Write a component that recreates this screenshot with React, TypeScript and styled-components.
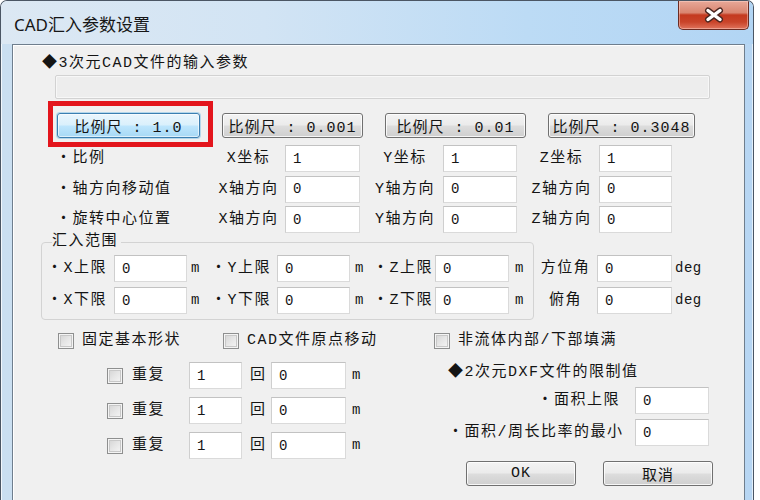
import styled, { createGlobalStyle, css } from "styled-components"

const UI_FONT = `"Liberation Mono", "Noto Sans CJK SC", monospace`

const GlobalStyle = createGlobalStyle`
  html, body {
    margin: 0;
    padding: 0;
    background: #ffffff;
    overflow: hidden;
  }
  body {
    font-family: ${UI_FONT};
  }
`

const Window = styled.div`
  width: 754px;
  height: 520px;
  box-sizing: border-box;
  border: 1px solid #4b5664;
  border-bottom: none;
  border-radius: 7px 7px 0 0;
  background: linear-gradient(90deg, #cadff1 0%, #c2dbf1 50%, #b7d6f3 100%);
  box-shadow: inset 1px 1px 0 rgba(255, 255, 255, 0.75), inset -1px 0 0 rgba(255, 255, 255, 0.6);
  display: flex;
  flex-direction: column;
  overflow: hidden;
`

const TitleBar = styled.div`
  height: 43px;
  flex: none;
  display: flex;
  justify-content: space-between;
  align-items: flex-start;
  background: linear-gradient(90deg, #dce8f3 0%, #d2e4f4 35%, #bcdbf5 70%, #b2d5f4 100%);
`

const Title = styled.div`
  padding: 4px 0 0 13px;
  line-height: 39px;
  font-family: "Noto Sans", "Noto Sans CJK SC", sans-serif;
  font-size: 17px;
  color: #161616;
`

const CloseButton = styled.div`
  width: 71px;
  height: 29px;
  margin-right: 4px;
  box-sizing: border-box;
  border: 1px solid #6b2b22;
  border-top: none;
  border-radius: 0 0 5px 5px;
  background: linear-gradient(#e8a898 0%, #d98570 42%, #c4391f 50%, #c9442a 75%, #e0735c 100%);
  box-shadow: inset 0 0 0 1px rgba(255, 220, 210, 0.45);
  display: flex;
  align-items: center;
  justify-content: center;
`

const Frame = styled.div`
  flex: 1;
  display: flex;
  padding: 0 8px 0 11px;
`

const Client = styled.div`
  flex: 1;
  box-sizing: border-box;
  border: 1px solid #6f7e8d;
  background: #f0f0f0;
  box-shadow: inset 1px 1px 0 #ffffff;
  color: #141414;
  font-size: 15px;
  letter-spacing: 1.5px;
`

const SectionHead = styled.div<{ $indent: number; $top: number }>`
  margin-top: ${({ $top }) => $top}px;
  padding-left: ${({ $indent }) => $indent}px;
  line-height: 20px;
  white-space: nowrap;
`

const PathBar = styled.div`
  margin: 1px 0 0 42px;
  width: 655px;
  height: 24px;
  box-sizing: border-box;
  border: 1px solid #d2d2d2;
  border-radius: 2px;
  background: #ededed;
  box-shadow: inset 0 0 0 1px #f7f7f7;
`

const ScaleRow = styled.div`
  display: flex;
  gap: 22px;
  margin: 14px 0 0 44px;
`

const PushButton = styled.button<{ $focused?: boolean; $marked?: boolean; $w: number }>`
  position: relative;
  width: ${({ $w }) => $w}px;
  height: 25px;
  box-sizing: border-box;
  padding: 0;
  border: 1px solid #707070;
  border-radius: 3px;
  background: linear-gradient(#f3f3f3 0%, #ebebeb 49%, #dddddd 51%, #cfcfcf 100%);
  box-shadow: inset 0 0 0 1px rgba(255, 255, 255, 0.8);
  font-family: ${UI_FONT};
  font-size: 15px;
  letter-spacing: 1px;
  color: #141414;
  white-space: nowrap;
  ${({ $focused }) =>
    $focused &&
    css`
      border-color: #3c7fb1;
      background: linear-gradient(#eaf6fd 0%, #d9f0fc 49%, #bee6fd 51%, #a7d9f5 100%);
      box-shadow: inset 0 0 0 1px rgba(255, 255, 255, 0.6), 0 0 0 1px rgba(120, 190, 230, 0.5);
    `}
  ${({ $marked }) =>
    $marked &&
    css`
      &::after {
        content: "";
        position: absolute;
        top: -13px;
        left: -10px;
        right: -14px;
        bottom: -10px;
        border: 5px solid #e3151c;
      }
    `}
`

const ParamGrid = styled.div`
  display: grid;
  grid-template-columns: 157px 73px 75px 83px 74px 82px 73px;
  grid-auto-rows: 27px;
  row-gap: 3.5px;
  margin: 7px 0 0 42px;
`

const Label = styled.div<{ $align?: "left" | "center" | "right"; $pad?: number }>`
  line-height: 27px;
  white-space: nowrap;
  text-align: ${({ $align }) => $align ?? "left"};
  padding-left: ${({ $pad }) => $pad ?? 0}px;
`

const Field = styled.input`
  width: 100%;
  height: 27px;
  box-sizing: border-box;
  margin: 0;
  padding: 0 0 0 7px;
  border: 1px solid #dadada;
  border-top-color: #c2c2c2;
  border-left-color: #cfcfcf;
  background: #ffffff;
  font-family: ${UI_FONT};
  font-size: 14px;
  color: #141414;
  outline: none;
`

const RangeRow = styled.div`
  display: flex;
  align-items: flex-start;
  margin-left: 28px;
`

const GroupBox = styled.fieldset`
  width: 493px;
  min-width: 0;
  box-sizing: border-box;
  margin: 0;
  padding: 0 0 5px 5px;
  border: 1px solid #d3d3d3;
  border-radius: 4px;
`

const Legend = styled.legend`
  margin-left: 5px;
  padding: 0 3px 0 0;
  line-height: 18px;
  font-size: 15px;
`

const RangeGrid = styled.div`
  display: grid;
  grid-template-columns: 67px 73px 24px 66px 73px 23px 62px 74px 22px;
  grid-auto-rows: 27px;
  row-gap: 5px;
  margin-top: 4px;
`

const Unit = styled.div<{ $pad: number }>`
  line-height: 27px;
  padding-left: ${({ $pad }) => $pad}px;
  font-size: 14px;
  letter-spacing: 0.5px;
`

const AngleGrid = styled.div`
  display: grid;
  grid-template-columns: 63px 75px auto;
  grid-auto-rows: 27px;
  row-gap: 5px;
  padding-top: 22px;
`

const CheckRow = styled.div`
  display: flex;
  margin: 13px 0 0 45px;
`

const CheckItem = styled.label<{ $w?: number }>`
  display: flex;
  align-items: center;
  gap: 8px;
  height: 16px;
  width: ${({ $w }) => ($w ? `${$w}px` : "auto")};
  white-space: nowrap;
  line-height: 16px;
`

const CheckBox = styled.span`
  width: 16px;
  height: 16px;
  flex: none;
  box-sizing: border-box;
  border: 1px solid #8e8f8f;
  background: linear-gradient(135deg, #d2d2d2 0%, #e6e6e6 50%, #f7f7f7 100%);
  box-shadow: inset 0 0 0 1px #f4f4f4, inset 0 0 0 2px #c8c8c8;
`

const Bottom = styled.div`
  display: grid;
  grid-template-columns: 435px 1fr;
`

const RepeatGrid = styled.div`
  display: grid;
  grid-template-columns: 16px 66px 53px 29px 75px auto;
  grid-auto-rows: 27px;
  row-gap: 8px;
  align-items: center;
  margin: 13px 0 0 94px;
`

const DxfColumn = styled.div`
  padding-top: 14px;
`

const DxfGrid = styled.div`
  display: grid;
  grid-template-columns: 172px 74px;
  column-gap: 15px;
  grid-auto-rows: 27px;
  row-gap: 5px;
  margin-top: 4px;
`

const DialogButtons = styled.div`
  display: flex;
  gap: 27px;
  margin: 15px 0 0 18px;
`

const scales = [
  { text: "比例尺 : 1.0", w: 143 },
  { text: "比例尺 : 0.001", w: 141 },
  { text: "比例尺 : 0.01", w: 141 },
  { text: "比例尺 : 0.3048", w: 147 },
]

const params = [
  { name: "・比例", axes: ["X坐标", "Y坐标", "Z坐标"], value: "1" },
  { name: "・轴方向移动值", axes: ["X轴方向", "Y轴方向", "Z轴方向"], value: "0" },
  { name: "・旋转中心位置", axes: ["X轴方向", "Y轴方向", "Z轴方向"], value: "0" },
]

const unitPads = [4, 5, 6]

function CloseGlyph() {
  return (
    <svg width="22" height="16" viewBox="0 0 22 16">
      <path d="M5 3.5 L17 12.5 M17 3.5 L5 12.5" stroke="#4b2620" strokeWidth="6" strokeLinecap="round" fill="none" />
      <path d="M5 3.5 L17 12.5 M17 3.5 L5 12.5" stroke="#ffffff" strokeWidth="3.4" strokeLinecap="round" fill="none" />
    </svg>
  )
}

export default function App() {
  return (
    <>
      <GlobalStyle />
      <Window>
        <TitleBar>
          <Title>CAD汇入参数设置</Title>
          <CloseButton>
            <CloseGlyph />
          </CloseButton>
        </TitleBar>
        <Frame>
          <Client>
            <SectionHead $indent={29} $top={9}>◆3次元CAD文件的输入参数</SectionHead>
            <PathBar />
            <ScaleRow>
              {scales.map((s, i) => (
                <PushButton key={s.text} $w={s.w} $focused={i === 0} $marked={i === 0}>
                  {s.text}
                </PushButton>
              ))}
            </ScaleRow>

            <ParamGrid>
              {params.map((row, r) => [
                <Label key={`n${r}`} $pad={1}>{row.name}</Label>,
                ...row.axes.flatMap((axis, a) => [
                  <Label key={`a${r}${a}`} $align="center" $pad={a === 0 ? 0 : 7}>
                    {axis}
                  </Label>,
                  <Field key={`f${r}${a}`} readOnly value={row.value} />,
                ]),
              ])}
            </ParamGrid>

            <RangeRow>
              <GroupBox>
                <Legend>汇入范围</Legend>
                <RangeGrid>
                  {["上限", "下限"].map((kind) =>
                    ["X", "Y", "Z"].flatMap((axis, a) => [
                      <Label key={`l${kind}${axis}`}>・{axis}{kind}</Label>,
                      <Field key={`f${kind}${axis}`} readOnly value="0" />,
                      <Unit key={`u${kind}${axis}`} $pad={unitPads[a]}>m</Unit>,
                    ])
                  )}
                </RangeGrid>
              </GroupBox>
              <AngleGrid>
                <Label $align="center">方位角</Label>
                <Field readOnly value="0" />
                <Unit $pad={3}>deg</Unit>
                <Label $align="center">俯角</Label>
                <Field readOnly value="0" />
                <Unit $pad={3}>deg</Unit>
              </AngleGrid>
            </RangeRow>

            <CheckRow>
              <CheckItem $w={165}>
                <CheckBox />
                固定基本形状
              </CheckItem>
              <CheckItem $w={211}>
                <CheckBox />
                CAD文件原点移动
              </CheckItem>
              <CheckItem>
                <CheckBox />
                非流体内部/下部填满
              </CheckItem>
            </CheckRow>

            <Bottom>
              <RepeatGrid>
                {[0, 1, 2].map((i) => [
                  <CheckBox key={`c${i}`} />,
                  <Label key={`l${i}`} $pad={9}>重复</Label>,
                  <Field key={`n${i}`} readOnly value="1" />,
                  <Label key={`t${i}`} $pad={8}>回</Label>,
                  <Field key={`d${i}`} readOnly value="0" />,
                  <Unit key={`u${i}`} $pad={6}>m</Unit>,
                ])}
              </RepeatGrid>
              <DxfColumn>
                <SectionHead $indent={0} $top={0}>◆2次元DXF文件的限制值</SectionHead>
                <DxfGrid>
                  <Label $align="right">・面积上限</Label>
                  <Field readOnly value="0" />
                  <Label $align="right">・面积/周长比率的最小</Label>
                  <Field readOnly value="0" />
                </DxfGrid>
                <DialogButtons>
                  <PushButton $w={110}>OK</PushButton>
                  <PushButton $w={110}>取消</PushButton>
                </DialogButtons>
              </DxfColumn>
            </Bottom>
          </Client>
        </Frame>
      </Window>
    </>
  )
}
